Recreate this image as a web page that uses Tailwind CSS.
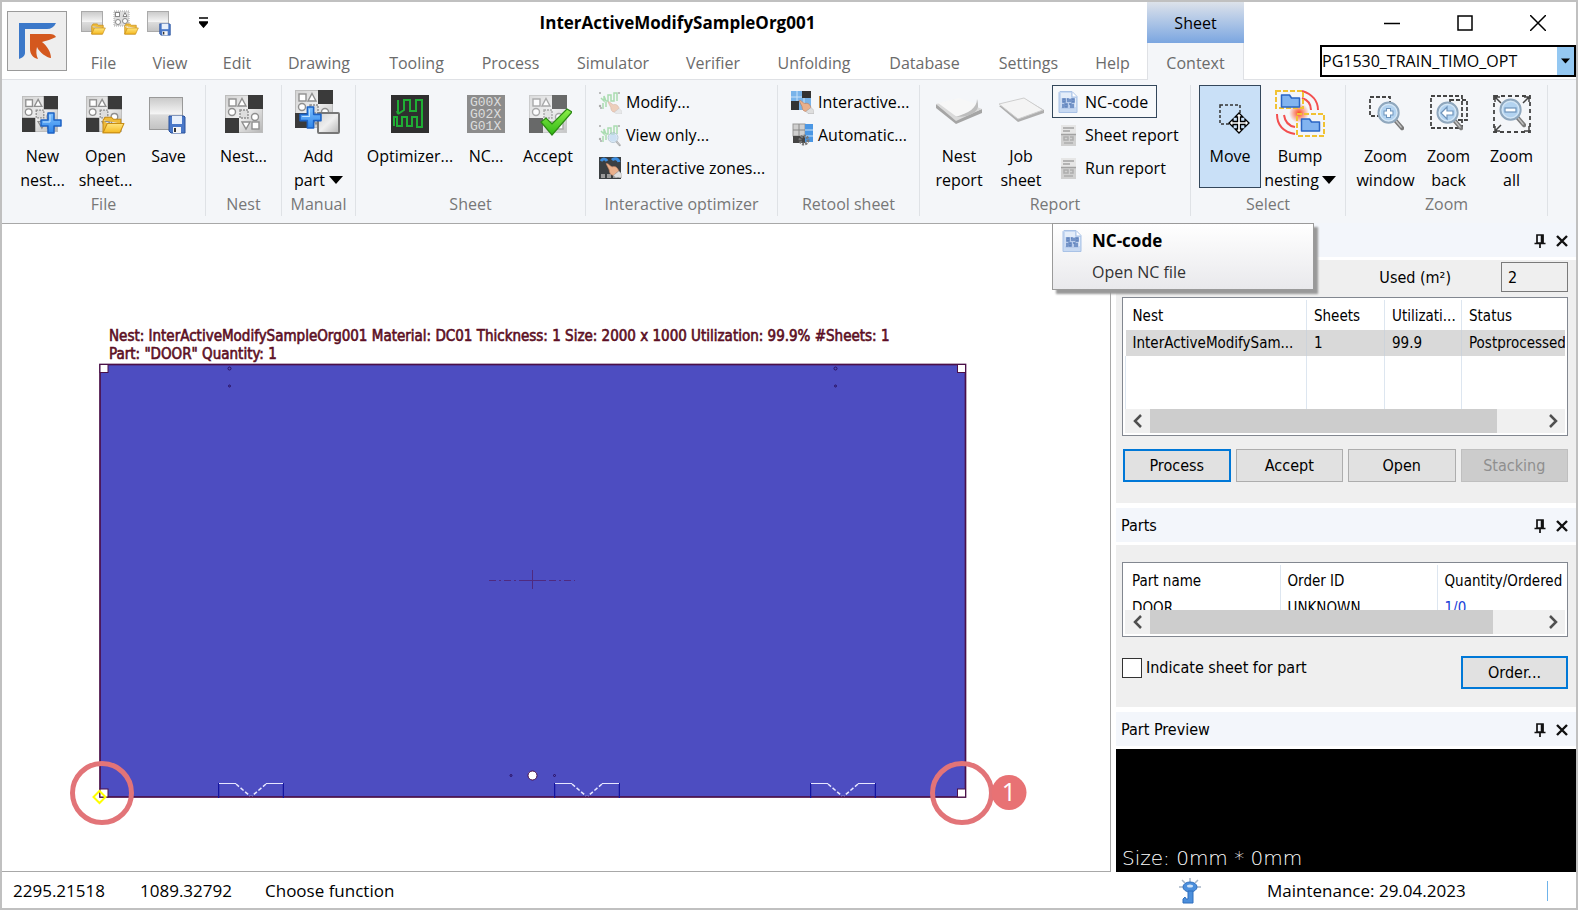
<!DOCTYPE html>
<html lang="en">
<head>
  <meta charset="UTF-8" />
  <meta name="viewport" content="width=device-width, initial-scale=1" />
  <title>InterActiveModifySampleOrg001</title>
  <script src="https://cdn.jsdelivr.net/npm/@tailwindcss/browser@4"></script>
</head>
<body class="h-screen flex flex-col overflow-hidden border-2 border-[#c0c0c0] bg-white text-black text-base font-['Open_Sans','Noto_Sans',sans-serif]">

  <!-- Shared icon parts -->
  <svg class="absolute w-0 h-0" aria-hidden="true">
    <defs>
      <linearGradient id="silver" x1="0" y1="0" x2="1" y2="1"><stop offset="0" stop-color="#d2d2d2" /><stop offset=".5" stop-color="#efefef" /><stop offset="1" stop-color="#b5b5b5" /></linearGradient>
      <linearGradient id="sheetFill" x1="0" y1="0" x2="0" y2="1"><stop offset="0" stop-color="#c9c9c9" /><stop offset=".5" stop-color="#f4f4f4" /><stop offset=".55" stop-color="#dcdcdc" /><stop offset="1" stop-color="#c2c2c2" /></linearGradient>
      <linearGradient id="gold" x1="0" y1="0" x2="0" y2="1"><stop offset="0" stop-color="#ffe680" /><stop offset="1" stop-color="#f5b921" /></linearGradient>
      <linearGradient id="blueFill" x1="0" y1="0" x2="0" y2="1"><stop offset="0" stop-color="#7cc0ff" /><stop offset="1" stop-color="#2f86ea" /></linearGradient>
      <linearGradient id="greenFill" x1="0" y1="0" x2="0" y2="1"><stop offset="0" stop-color="#8df04a" /><stop offset="1" stop-color="#30b814" /></linearGradient>
      <radialGradient id="glow"><stop offset="0" stop-color="#ff4a1c" /><stop offset="1" stop-color="#ff4a1c" stop-opacity="0" /></radialGradient>
    </defs>
    <symbol id="grid" viewBox="0 0 38 38">
      <rect x=".5" y=".5" width="37" height="37" fill="url(#silver)" stroke="#bdbdbd" />
      <rect x="23" y="0" width="15" height="14" fill="#3a3a3a" />
      <rect x="0" y="23" width="14" height="15" fill="#3a3a3a" />
      <g fill="#fff" stroke="#8f8f8f" stroke-width="1.4">
        <rect x="4" y="4" width="7" height="7" /><path d="M17 3.500l4 7.500h-8z" /><circle cx="7" cy="17" r="3.500" />
        <rect x="15" y="15" width="8" height="8" stroke-dasharray="2 1" fill="#ddd" /><circle cx="30" cy="22" r="3.500" />
        <path d="M17 27h8l-4 7z" /><rect x="27" y="27" width="7" height="7" />
      </g>
    </symbol>
    <symbol id="plus" viewBox="0 0 22 22">
      <path d="M8 1h6v7h7v6h-7v7H8v-7H1V8h7z" fill="url(#blueFill)" stroke="#1c62c4" stroke-width="1.5" stroke-linejoin="round" />
      <path d="M10 3v7H3" fill="none" stroke="#bfe2ff" />
    </symbol>
    <symbol id="folder" viewBox="0 0 22 17">
      <path d="M1 4l2-3h6l2 2h7v4M1 4v12h16" fill="#eebb3a" stroke="#c88d14" />
      <path d="M1 16l4-9h16l-4 9z" fill="url(#gold)" stroke="#c88d14" stroke-linejoin="round" />
    </symbol>
    <symbol id="floppy" viewBox="0 0 18 19">
      <path d="M1 1h15l1 1v16H3l-2-2z" fill="#4a78c8" stroke="#29509b" />
      <rect x="4" y="1" width="10" height="8" fill="#e8f0fb" /><rect x="5" y="12" width="8" height="6" fill="#f6f6f6" /><rect x="6" y="13" width="2" height="4" fill="#333" />
    </symbol>
    <symbol id="lens" viewBox="0 0 28 32">
      <path d="M19 20l7 8" stroke="#7a7a7a" stroke-width="4.500" stroke-linecap="round" /><path d="M20 21l5 6" stroke="#c4c4c4" stroke-width="1.500" stroke-linecap="round" />
      <circle cx="12" cy="12" r="10.500" fill="#d3e6f6" stroke="#8fa7bd" stroke-width="2" /><circle cx="12" cy="12" r="8" fill="#b3d3f0" />
    </symbol>
    <symbol id="zigzag" viewBox="0 0 24 24">
      <path d="M3 8l3 3v-5l2 5h2V5h3v6h3V3h3v8M5 13v6m3-7v5" fill="none" stroke="#a9dcb0" stroke-width="1.500" />
      <g fill="#aaa"><circle cx="2" cy="3" r="1" /><circle cx="21" cy="3" r="1" /><circle cx="2" cy="16" r="1.200" /><circle cx="3" cy="18" r="1" /></g>
    </symbol>
    <symbol id="hand" viewBox="0 0 16 14">
      <path d="M1 1c2-1 4 3 6 3 3-1 5 1 6 4l-5 4C5 12 4 9 4 7z" fill="#e9b08c" stroke="#b97a5c" stroke-width=".6" /><path d="M8 12l5-4 3 3v3h-6z" fill="#dedede" stroke="#aaa" stroke-width=".5" />
    </symbol>
    <symbol id="ncfile" viewBox="0 0 22 24">
      <path d="M3 1.500h12l5 5v16H2v-20z" fill="#c7d9f2" stroke="#a9c2e6" /><path d="M4 3h10v5h5v9H4z" fill="#e4edf9" /><path d="M15 2v5h5" fill="#fff" stroke="#a9c2e6" />
      <rect x="4.500" y="8" width="13" height="11" fill="#b9cceb" />
      <path d="M6 9v3h2V9zM10 9h1v3M13 9v3M15 9h2v3h-2zM6 14v4M8 14h2v3H8zM12 14h2v4M16 14v4" fill="none" stroke="#5f82bd" stroke-width="1.500" />
    </symbol>
    <symbol id="report" viewBox="0 0 22 24">
      <rect x="4" y="2" width="15" height="21" fill="#d0d0d0" /><rect x="4" y="2" width="15" height="9" fill="#e6e6e6" />
      <path d="M6 5h11M6 8h7M4 11.500h15" stroke="#a2a2a2" stroke-width="1.500" /><path d="M7 14h4v3H7zM13 14h3v3h-3M7 20h9" fill="none" stroke="#adadad" stroke-width="1.500" />
    </symbol>
    <symbol id="part" viewBox="0 0 20 14">
      <path d="M1 1h8l2 3h8v9H1z" fill="#82b4f0" stroke="#2a65c4" stroke-width="1.500" stroke-linejoin="round" />
    </symbol>
    <symbol id="pin" viewBox="0 0 14 16">
      <path d="M4 2h6v8H4zM1.500 10.500h11M7 11v4" fill="none" stroke="#111" stroke-width="1.700" /><path d="M9 2v8" stroke="#111" stroke-width="2.500" />
    </symbol>
    <symbol id="cross" viewBox="0 0 14 14"><path d="M2 2l10 10M12 2L2 12" stroke="#111" stroke-width="2.400" /></symbol>
    <symbol id="caret" viewBox="0 0 14 8"><path d="M0 0h14L7 8z" fill="#000" /></symbol>
    <symbol id="chevron" viewBox="0 0 10 14"><path d="M8 1L2 7l6 6" fill="none" stroke="#505050" stroke-width="2.500" /></symbol>
    <symbol id="notch" viewBox="0 0 66 16">
      <path d="M.5 1v15M65.500 1v15" stroke="#1414a0" stroke-width="1.500" /><path d="M1 1.500h17M48 1.500h17" stroke="#e6e6ff" />
      <path d="M18 2l14 12M48 2L34 14" stroke="#e6e6ff" stroke-width="1.500" stroke-dasharray="4 2" />
    </symbol>
  </svg>

  <!-- Title bar and tabs -->
  <header class="flex shrink-0">
    <div class="shrink-0 pl-[5px] pt-[9px] border-b border-[#dfe1e5]">
      <button class="w-[60px] h-[60px] border border-[#9a9a9a] bg-[#eeeeee] flex items-center justify-center" aria-label="Application menu">
        <svg class="w-10 h-10" viewBox="0 0 40 40">
          <path d="M2 2h37c-2 4-5 6-9 6H8v24c0 3-3 5-6 6z" fill="#3b78c9" />
          <path d="M13 13h20c3 0 5 1 6 3-4 2-10 4-14 5 5 4 9 10 9 16-4 0-12-6-14-11-1 4-1 8 1 12-5-1-8-5-8-10z" fill="#d4581e" />
        </svg>
      </button>
    </div>
    <div class="flex-1 min-w-0">
      <div class="flex h-[41px]">
        <div class="flex items-center gap-[7px] pl-[13px]">
          <button aria-label="Open"><svg class="w-[26px] h-[26px]" viewBox="0 0 26 26"><rect x="1.500" y="1.500" width="21" height="20" fill="url(#sheetFill)" stroke="#aaa" /><use href="#folder" x="11" y="13" width="15" height="12" /></svg></button>
          <button aria-label="Open sheet"><svg class="w-[26px] h-[26px]" viewBox="0 0 26 26"><rect x="1" y="1" width="15" height="15" fill="#ddd" stroke="#aaa" stroke-dasharray="1 1" /><g fill="#fff" stroke="#888"><rect x="2.500" y="2.500" width="4" height="4" /><path d="M10 6.500l2-4 2 4z" /><circle cx="5" cy="12" r="2.500" /><circle cx="12" cy="11" r="2.500" /></g><use href="#folder" x="11" y="13" width="15" height="12" /></svg></button>
          <button aria-label="Save"><svg class="w-[26px] h-[26px]" viewBox="0 0 26 26"><rect x="1.500" y="1.500" width="21" height="20" fill="url(#sheetFill)" stroke="#aaa" /><use href="#floppy" x="13" y="13" width="12" height="13" /></svg></button>
          <button class="ml-5" aria-label="Customize toolbar"><svg class="w-[9px] h-[11px]" viewBox="0 0 9 11"><path d="M0 1h9M0 5h9L4.500 10z" stroke="#000" stroke-width="1.500" /></svg></button>
        </div>
        <h1 class="flex-1 flex items-center justify-center text-[17px] font-bold">InterActiveModifySampleOrg001</h1>
        <div class="w-[97px] flex items-center justify-center bg-gradient-to-b from-[#dde2ea] to-[#7ba6e0]">Sheet</div>
        <div class="w-[332px] flex items-center justify-end gap-[57px] pr-[30px]">
          <button aria-label="Minimize"><svg class="w-4 h-4" viewBox="0 0 16 16"><path d="M0 8.500h16" stroke="#000" stroke-width="1.500" /></svg></button>
          <button aria-label="Maximize"><svg class="w-4 h-4" viewBox="0 0 16 16"><rect x="1" y="1" width="14" height="14" fill="none" stroke="#000" stroke-width="1.500" /></svg></button>
          <button aria-label="Close"><svg class="w-4 h-4" viewBox="0 0 16 16"><path d="M0 0l16 16M16 0L0 16" stroke="#000" stroke-width="1.500" /></svg></button>
        </div>
      </div>
      <div class="flex h-[37px]">
        <nav class="flex flex-1 pl-[6px] pt-1 text-[#6b6b6b] border-b border-[#dfe1e5] *:flex *:items-center *:justify-center">
          <a href="#" class="w-[61px]">File</a>
          <a href="#" class="w-[72px]">View</a>
          <a href="#" class="w-[62px]">Edit</a>
          <a href="#" class="w-[102px]">Drawing</a>
          <a href="#" class="w-[93px]">Tooling</a>
          <a href="#" class="w-[95px]">Process</a>
          <a href="#" class="w-[110px]">Simulator</a>
          <a href="#" class="w-[90px]">Verifier</a>
          <a href="#" class="w-[112px]">Unfolding</a>
          <a href="#" class="w-[109px]">Database</a>
          <a href="#" class="w-[99px]">Settings</a>
          <a href="#" class="w-[69px]">Help</a>
        </nav>
        <a href="#" class="w-[97px] flex items-center justify-center pt-[3px] bg-[#f4f6f9] border-x border-[#dfe1e5] text-[#6b6b6b]">Context</a>
        <div class="w-[332px] flex justify-end items-start pt-[2px] border-b border-[#dfe1e5]">
          <div class="relative w-[256px] h-8">
            <select aria-label="Machine" class="appearance-none w-full h-full border-2 border-black bg-white">
              <option>PG1530_TRAIN_TIMO_OPT</option>
            </select>
            <span class="absolute right-[2px] top-[2px] w-[17px] h-7 bg-[#94c8f2] flex items-center justify-center pointer-events-none"><svg class="w-[9px] h-[6px]"><use href="#caret" /></svg></span>
          </div>
        </div>
      </div>
    </div>
  </header>

  <!-- Ribbon -->
  <section class="flex shrink-0 h-[143px] pt-[5px] pb-[7px] bg-[#f4f6f9] leading-6 whitespace-nowrap">
    <div class="w-[204px] flex flex-col border-r border-[#dfe2e6]">
      <div class="flex h-[107px] pl-[9px]">
        <button class="w-[63px] h-[106px] flex flex-col items-center pt-[5px]">
          <svg class="w-12 h-12 mb-[6px] shrink-0" viewBox="0 0 48 48"><use href="#grid" x="3" y="6" width="36" height="36" /><use href="#plus" x="20" y="22" width="24" height="22" /></svg>
          New<br>nest...
        </button>
        <button class="w-[63px] h-[106px] flex flex-col items-center pt-[5px]">
          <svg class="w-12 h-12 mb-[6px] shrink-0" viewBox="0 0 48 48"><use href="#grid" x="4" y="6" width="36" height="36" /><use href="#folder" x="20" y="26" width="23" height="18" /></svg>
          Open<br>sheet...
        </button>
        <button class="w-[63px] h-[106px] flex flex-col items-center pt-[5px]">
          <svg class="w-12 h-12 mb-[6px] shrink-0" viewBox="0 0 48 48"><rect x="4.500" y="7.500" width="33" height="32" fill="url(#sheetFill)" stroke="#999" /><use href="#floppy" x="23" y="25" width="18" height="19" /></svg>
          Save
        </button>
      </div>
      <div class="text-center text-[#777]">File</div>
    </div>
    <div class="w-[76px] flex flex-col border-r border-[#dfe2e6]">
      <div class="flex h-[107px] justify-center">
        <button class="h-[106px] flex flex-col items-center pt-[5px]">
          <svg class="w-12 h-12 mb-[6px] shrink-0" viewBox="0 0 48 48"><use href="#grid" x="5" y="5" width="38" height="38" /></svg>
          Nest...
        </button>
      </div>
      <div class="text-center text-[#777]">Nest</div>
    </div>
    <div class="w-[74px] flex flex-col border-r border-[#dfe2e6]">
      <div class="flex h-[107px] justify-center">
        <button class="h-[106px] flex flex-col items-center pt-[5px]">
          <svg class="w-12 h-12 mb-[6px] shrink-0" viewBox="0 0 48 48"><use href="#grid" x="1" y="0" width="38" height="38" /><rect x="24" y="23" width="21" height="20" rx="1" fill="url(#silver)" stroke="#777" stroke-width="2" /><use href="#plus" x="5" y="16" width="23" height="23" /></svg>
          Add
          <span class="flex items-center gap-1">part<svg class="w-[14px] h-2"><use href="#caret" /></svg></span>
        </button>
      </div>
      <div class="text-center text-[#777]">Manual</div>
    </div>
    <div class="w-[230px] flex flex-col border-r border-[#dfe2e6]">
      <div class="flex h-[107px] pl-[8px]">
        <button class="w-[92px] h-[106px] flex flex-col items-center pt-[5px]">
          <svg class="w-12 h-12 mb-[6px] shrink-0" viewBox="0 0 48 48"><rect x="5" y="5" width="38" height="38" fill="#2f2f2f" /><path d="M12 10v14l-1-3m1 3l6-4V10h6v11h6V10h6v27h-5V27h-5v9h-5V27h-5v9h-5V27h-3v9" fill="none" stroke="#1fae34" stroke-width="2" /></svg>
          Optimizer...
        </button>
        <button class="w-[60px] h-[106px] flex flex-col items-center pt-[5px]">
          <svg class="w-12 h-12 mb-[6px] shrink-0" viewBox="0 0 48 48" font-family="Liberation Mono, monospace" font-size="13" fill="#dcdcdc"><rect x="5" y="5" width="38" height="38" fill="#8c8c8c" /><text x="8" y="16">G00X</text><text x="8" y="28">G02X</text><text x="8" y="40">G01X</text></svg>
          NC...
        </button>
        <button class="w-[64px] h-[106px] flex flex-col items-center pt-[5px]">
          <svg class="w-12 h-12 mb-[6px] shrink-0" viewBox="0 0 48 48"><use href="#grid" x="5" y="5" width="38" height="38" opacity=".75" /><path d="M17 32l5-4 6 6 15-15 5 3-20 23z" fill="url(#greenFill)" stroke="#2c8a14" stroke-width="1.200" /></svg>
          Accept
        </button>
      </div>
      <div class="text-center text-[#777]">Sheet</div>
    </div>
    <div class="w-[192px] flex flex-col border-r border-[#dfe2e6]">
      <div class="h-[107px] pl-3">
        <button class="h-[33px] flex items-center gap-1"><svg class="w-6 h-6" viewBox="0 0 24 24"><use href="#zigzag" width="24" height="24" /><use href="#hand" x="9" y="11" width="15" height="13" opacity=".55" /></svg>Modify...</button>
        <button class="h-[33px] flex items-center gap-1"><svg class="w-6 h-6" viewBox="0 0 24 24"><use href="#zigzag" width="24" height="24" /><use href="#lens" x="9" y="9" width="14" height="15" opacity=".6" /></svg>View only...</button>
        <button class="h-[33px] flex items-center gap-1"><svg class="w-6 h-6" viewBox="0 0 24 24"><rect x="1" y="1" width="22" height="22" fill="#3b3f42" /><path d="M3 5c2-3 5-2 6 0M14 4c2-2 6-2 7 2" stroke="#3d8ee0" stroke-width="3" fill="none" /><path d="M3 20h20" stroke="#999" stroke-width="4" stroke-dasharray="4 2" /><use href="#hand" x="7" y="6" width="17" height="16" /></svg>Interactive zones...</button>
      </div>
      <div class="text-center text-[#777]">Interactive optimizer</div>
    </div>
    <div class="w-[142px] flex flex-col border-r border-[#dfe2e6]">
      <div class="h-[107px] pl-3">
        <button class="h-[33px] flex items-center gap-1"><svg class="w-6 h-6" viewBox="0 0 24 24"><rect x="1" y="1" width="20" height="19" fill="#79b4ea" /><path d="M1 7h20M7 1v19M14 1v19" stroke="#c9e2f8" /><path d="M12 1h9v7h-9zM1 11h8v9H1z" fill="#333" /><use href="#hand" x="8" y="9" width="16" height="15" /></svg>Interactive...</button>
        <button class="h-[33px] flex items-center gap-1"><svg class="w-6 h-6" viewBox="0 0 24 24"><rect x="3" y="1" width="12" height="12" fill="#cfcfcf" stroke="#999" /><path d="M3 7h12M9 1v12" stroke="#888" /><rect x="15" y="1" width="8" height="18" fill="#4b97e4" /><path d="M15 7h8M15 13h8" stroke="#c9e2f8" /><rect x="3" y="13" width="12" height="7" fill="#444" /><circle cx="14" cy="17" r="4" fill="none" stroke="#777" stroke-width="3" stroke-dasharray="2 1" /></svg>Automatic...</button>
      </div>
      <div class="text-center text-[#777]">Retool sheet</div>
    </div>
    <div class="w-[271px] flex flex-col border-r border-[#dfe2e6]">
      <div class="flex h-[107px] pl-[8px]">
        <button class="w-[62px] h-[106px] flex flex-col items-center pt-[5px]">
          <svg class="w-12 h-12 mb-[6px] shrink-0" viewBox="0 0 48 48"><path d="M1 18l20 16 26-11v-4L21 29 1 14z" fill="#a5a5a5" /><path d="M1 14L22 9l25 10L21 31z" fill="#dadada" /><path d="M3 13L24 8l18 6c-3 8-12 10-20 13z" fill="#f7f7f7" /><path d="M42 9c0 9-8 14-22 18 12 0 21-3 23-10 0-3 0-5-1-8z" fill="#bdbdbd" /></svg>
          Nest<br>report
        </button>
        <button class="w-[62px] h-[106px] flex flex-col items-center pt-[5px]">
          <svg class="w-12 h-12 mb-[6px] shrink-0" viewBox="0 0 48 48"><path d="M2 16l19 16 26-9v-3L28 9z" fill="#aeaeae" /><path d="M2 14l25-6 19 12-25 9z" fill="#f4f4f4" stroke="#cecece" /></svg>
          Job<br>sheet
        </button>
        <div>
          <button class="h-[33px] flex items-center gap-[6px] pl-1 pr-2 border border-[#33475b] bg-[#f7f9fb]"><svg class="w-[22px] h-6"><use href="#ncfile" /></svg>NC-code</button>
          <button class="h-[33px] flex items-center gap-[6px] pl-[5px]"><svg class="w-[22px] h-6"><use href="#report" /></svg>Sheet report</button>
          <button class="h-[33px] flex items-center gap-[6px] pl-[5px]"><svg class="w-[22px] h-6"><use href="#report" /></svg>Run report</button>
        </div>
      </div>
      <div class="text-center text-[#777]">Report</div>
    </div>
    <div class="w-[155px] flex flex-col border-r border-[#dfe2e6]">
      <div class="flex h-[107px] pl-[8px]">
        <button class="w-[62px] h-[103px] flex flex-col items-center pt-1 border border-[#33475b] bg-[#c9e0f7]">
          <svg class="w-12 h-12 mb-[6px] shrink-0" viewBox="0 0 48 48"><rect x="14" y="15" width="20" height="19" fill="none" stroke="#333" stroke-width="1.500" stroke-dasharray="3 2" /><path d="M33 23l4 4h-2.500v4.500h4.500v-2.500l4 4-4 4v-2.500h-4.500v4.500h2.500l-4 4-4-4h2.500v-4.500h-4.500v2.500l-4-4 4-4v2.500h4.500v-4.500h-2.500z" fill="#fff" stroke="#000" stroke-width="1.300" /></svg>
          Move
        </button>
        <button class="w-[78px] h-[106px] flex flex-col items-center pt-[5px]">
          <svg class="w-[52px] h-12 mb-[6px] shrink-0" viewBox="0 0 52 48"><circle cx="25" cy="23" r="10" fill="url(#glow)" /><path d="M28 1c10 3 16 10 16 19M28 8c6 2 9 6 9 12M3 24c0 12 7 18 18 20M10 25c1 7 5 11 11 12" fill="none" stroke="#f34f4f" stroke-width="2" /><rect x="2" y="1" width="27" height="17" fill="none" stroke="#f1c232" stroke-width="2" stroke-dasharray="5 2" /><rect x="23" y="24" width="27" height="22" fill="none" stroke="#f1c232" stroke-width="2" stroke-dasharray="5 2" /><use href="#part" x="6" y="4" width="21" height="14" /><use href="#part" x="26" y="28" width="21" height="14" /></svg>
          Bump
          <span class="flex items-center gap-[3px]">nesting<svg class="w-[14px] h-2"><use href="#caret" /></svg></span>
        </button>
      </div>
      <div class="text-center text-[#777]">Select</div>
    </div>
    <div class="w-[202px] flex flex-col border-r border-[#dfe2e6]">
      <div class="flex h-[107px] pl-[8px]">
        <button class="w-[63px] h-[106px] flex flex-col items-center pt-[5px]">
          <svg class="w-12 h-12 mb-[6px] shrink-0" viewBox="0 0 48 48"><rect x="8" y="7" width="20" height="19" fill="none" stroke="#444" stroke-width="1.800" stroke-dasharray="4 2" /><use href="#lens" x="15" y="11" width="27" height="31" /><path d="M21.500 23h10m-5-5v10" stroke="#6f94bb" stroke-width="5" /><path d="M22.500 23h8m-4-4v8" stroke="#fff" stroke-width="3" /></svg>
          Zoom<br>window
        </button>
        <button class="w-[63px] h-[106px] flex flex-col items-center pt-[5px]">
          <svg class="w-12 h-12 mb-[6px] shrink-0" viewBox="0 0 48 48"><rect x="6" y="6" width="31" height="32" fill="none" stroke="#444" stroke-width="1.800" stroke-dasharray="4 2" /><rect x="25" y="10" width="17" height="20" fill="none" stroke="#444" stroke-width="1.800" stroke-dasharray="4 2" /><use href="#lens" x="11" y="11" width="27" height="31" /><path d="M16 23l6-6v4h6v4h-6v4z" fill="#fff" stroke="#6f94bb" stroke-width="1.200" /></svg>
          Zoom<br>back
        </button>
        <button class="w-[63px] h-[106px] flex flex-col items-center pt-[5px]">
          <svg class="w-12 h-12 mb-[6px] shrink-0" viewBox="0 0 48 48"><rect x="6" y="6" width="36" height="36" fill="none" stroke="#444" stroke-width="1.800" stroke-dasharray="4 3" /><path d="M7 12V7h5M36 7h5v5M41 36v5h-5M12 41H7v-5M7 7l6 6M41 7l-6 6M7 41l6-6" fill="none" stroke="#444" stroke-width="1.500" /><use href="#lens" x="11" y="8" width="27" height="31" /><rect x="17" y="18" width="11" height="4" fill="#fff" stroke="#6f94bb" stroke-width="1.200" /></svg>
          Zoom<br>all
        </button>
      </div>
      <div class="text-center text-[#777]">Zoom</div>
    </div>
  </section>

  <!-- Work area -->
  <div class="flex flex-1 min-h-0 relative font-['DejaVu_Sans_Condensed','Noto_Sans',sans-serif]">
    <main class="flex-1 min-w-0 mr-[5px] overflow-hidden border border-l-0 border-[#a8a8a8] bg-white">
      
      <svg class="w-[1108px] h-[647px]" viewBox="2 224 1108 647">
        <g class="whitespace-pre" fill="#5c0f24" stroke="#5c0f24" stroke-width=".6" font-size="15">
          <text x="109" y="341">Nest: InterActiveModifySampleOrg001  Material: DC01  Thickness: 1  Size: 2000 x 1000  Utilization: 99.9%  #Sheets: 1</text>
          <text x="109" y="359">Part: "DOOR"  Quantity: 1</text>
        </g>
        <rect x="100" y="364.500" width="865.500" height="432.500" fill="#4d4dc1" stroke="#4a1048" stroke-width="1.700" />
        <g fill="#fff" stroke="#4a1048">
          <rect x="100" y="364.500" width="8" height="8" /><rect x="957.500" y="364.500" width="8" height="8" />
          <rect x="100" y="789" width="8" height="8" /><rect x="957.500" y="789" width="8" height="8" />
          <circle cx="532.500" cy="775.500" r="4.500" />
        </g>
        <g fill="none" stroke="#2a1060">
          <circle cx="229.500" cy="368.500" r="1.500" /><circle cx="229.500" cy="386" r="1" /><circle cx="835.500" cy="368.500" r="1.500" /><circle cx="835.500" cy="386" r="1" />
          <circle cx="511" cy="775.500" r="1" /><circle cx="554.500" cy="775.500" r="1" />
          <path d="M489 580.500h86" stroke="#4f2a80" stroke-dasharray="7 3 2 3" /><path d="M532.500 570v19M519 580.500h27" stroke="#4f2a80" />
        </g>
        <use href="#notch" x="218" y="782" width="66" height="16" />
        <use href="#notch" x="554" y="782" width="66" height="16" />
        <use href="#notch" x="810" y="782" width="66" height="16" />
        <path d="M99.500 791l6 6-6 6-6-6z" fill="none" stroke="#ff0" stroke-width="2" />
        <g fill="none" stroke="#e27478" stroke-width="5"><circle cx="102" cy="793" r="29.500" /><circle cx="962" cy="793" r="29.500" /></g>
        <circle cx="1009" cy="792.500" r="17.500" fill="#e87274" />
        <text x="1009" y="801" fill="#fff" font-size="25" font-family="Open Sans, sans-serif" text-anchor="middle">1</text>
      </svg>
    </main>

    <aside class="w-[460px] shrink-0 flex flex-col bg-[#efefef]">
      <div class="h-[34px] shrink-0 flex items-center justify-end gap-2 pr-[7px] pt-px bg-[#f3f6fb]">
        <button aria-label="Pin"><svg class="w-[14px] h-4"><use href="#pin" /></svg></button>
        <button aria-label="Close panel"><svg class="w-[14px] h-[14px]"><use href="#cross" /></svg></button>
      </div>
      <div class="border-t-3 border-white pl-[6px] pr-2 pb-[21px]">
        <div class="flex items-center justify-end pt-[2px]">
          <label for="used" class="pt-px">Used (m²)</label>
          <input id="used" value="2" readonly class="ml-[50px] w-[67px] h-[30px] px-[6px] border border-[#7a7a7a] bg-[#efefef]" />
        </div>
        <div class="mt-[5px] h-[139px] flex flex-col border border-[#828790] bg-white p-[2px]">
          <div class="flex-1 flex overflow-hidden text-[15px]">
            <table class="table-fixed w-[520px] shrink-0 h-full text-left whitespace-nowrap">
              <thead>
                <tr class="h-[30px] *:font-normal *:pt-[3px] *:pl-[7px] *:border-r *:border-[#dde6f0]">
                  <th class="w-[181px]">Nest</th><th class="w-[78px]">Sheets</th><th class="w-[77px]">Utilizati...</th><th>Status</th>
                </tr>
              </thead>
              <tbody>
                <tr class="h-[26px] bg-[#d9d9d9] *:pl-[7px] *:border-r *:border-[#cdd3da]"><td>InterActiveModifySam...</td><td>1</td><td>99.9</td><td>Postprocessed</td></tr>
                <tr class="*:border-r *:border-[#dde6f0]"><td class="border-l border-l-[#7da7d8]"></td><td></td><td></td><td></td></tr>
              </tbody>
            </table>
          </div>
          <div class="h-6 flex items-stretch bg-[#f0f0f0]">
            <button class="w-[25px] flex items-center justify-center" aria-label="Scroll left"><svg class="w-[10px] h-[14px]"><use href="#chevron" /></svg></button>
            <div class="flex-1"><div class="h-full bg-[#cdcdcd]" style="width: 89%"></div></div>
            <button class="w-[25px] flex items-center justify-center" aria-label="Scroll right"><svg class="w-[10px] h-[14px] rotate-180"><use href="#chevron" /></svg></button>
          </div>
        </div>
        <div class="grid grid-cols-4 gap-[5px] mt-[13px] pl-px *:h-[33px] *:bg-[#e1e1e1]">
          <button class="border-2 border-[#0078d7]">Process</button>
          <button class="border border-[#adadad]">Accept</button>
          <button class="border border-[#adadad]">Open</button>
          <button class="border border-[#bfbfbf] bg-[#cccccc]! text-[#8f8f8f]" disabled>Stacking</button>
        </div>
      </div>

      <div class="h-[42px] shrink-0 flex items-center gap-2 pl-[5px] pr-[7px] pt-[2px] bg-[#f3f6fb] border-t-5 border-b-3 border-white">
        <h2 class="flex-1">Parts</h2>
        <button aria-label="Pin"><svg class="w-[14px] h-4"><use href="#pin" /></svg></button>
        <button aria-label="Close panel"><svg class="w-[14px] h-[14px]"><use href="#cross" /></svg></button>
      </div>
      <div class="pl-[6px] pr-2 pt-[17px] pb-[18px]">
        <div class="h-[75px] flex flex-col border border-[#828790] bg-white p-[2px]">
          <div class="flex-1 overflow-hidden text-[15px]">
            <table class="table-fixed w-[520px] text-left whitespace-nowrap">
              <thead>
                <tr class="h-[32px] *:font-normal *:pl-[7px] *:border-r *:border-[#dde6f0]"><th class="w-[155px]">Part name</th><th class="w-[157px]">Order ID</th><th>Quantity/Ordered</th></tr>
              </thead>
              <tbody>
                <tr class="*:pl-[7px] *:border-r *:border-[#dde6f0]"><td>DOOR</td><td>UNKNOWN</td><td class="text-[#1a3fd8]">1/0</td></tr>
              </tbody>
            </table>
          </div>
          <div class="h-6 flex items-stretch bg-[#f0f0f0]">
            <button class="w-[25px] flex items-center justify-center" aria-label="Scroll left"><svg class="w-[10px] h-[14px]"><use href="#chevron" /></svg></button>
            <div class="flex-1"><div class="h-full bg-[#cdcdcd]" style="width: 88%"></div></div>
            <button class="w-[25px] flex items-center justify-center" aria-label="Scroll right"><svg class="w-[10px] h-[14px] rotate-180"><use href="#chevron" /></svg></button>
          </div>
        </div>
        <div class="flex items-start justify-between mt-[19px]">
          <label class="flex items-center gap-1"><input type="checkbox" class="appearance-none w-5 h-5 border border-[#333] bg-white" />Indicate sheet for part</label>
          <button class="w-[107px] h-[33px] border-2 border-[#0078d7] bg-[#e1e1e1]">Order...</button>
        </div>
      </div>

      <div class="h-[42px] shrink-0 flex items-center gap-2 pl-[5px] pr-[7px] pt-[2px] bg-[#f3f6fb] border-t-5 border-b-3 border-white">
        <h2 class="flex-1">Part Preview</h2>
        <button aria-label="Pin"><svg class="w-[14px] h-4"><use href="#pin" /></svg></button>
        <button aria-label="Close panel"><svg class="w-[14px] h-[14px]"><use href="#cross" /></svg></button>
      </div>
      <div class="flex-1 flex items-end bg-black text-white text-xl font-extralight pl-[6px] font-['DejaVu_Sans',sans-serif]">Size: 0mm * 0mm</div>
    </aside>

    <!-- Tooltip -->
    <div role="tooltip" class="absolute right-[262px] top-0 w-[262px] h-[67px] flex gap-[9px] pl-2 pt-[5px] border border-[#9a9a9a] bg-gradient-to-b from-white to-[#e9e9ec] shadow-[4px_4px_2px_#999] font-['Open_Sans','Noto_Sans',sans-serif]">
      <svg class="w-[22px] h-6"><use href="#ncfile" /></svg>
      <div class="leading-6"><div class="text-[17px] font-bold">NC-code</div><div class="mt-[7px] text-[#333]">Open NC file</div></div>
    </div>
  </div>

  <!-- Status bar -->
  <footer class="h-9 shrink-0 flex items-center pl-[11px] pr-7 pt-[2px] text-[17px]">
    <span class="w-[127px]">2295.21518</span>
    <span class="w-[125px]">1089.32792</span>
    <span class="flex-1">Choose function</span>
    <svg class="w-[22px] h-[26px]" viewBox="0 0 22 26"><path d="M3 2l3 3M11 0v4M19 2l-3 3M0 9h4M18 9h4" stroke="#a5b4c6" stroke-width="1.500" /><ellipse cx="11" cy="9" rx="7" ry="5" fill="#4c8fdc" stroke="#2f6fbe" /><ellipse cx="11" cy="8" rx="3" ry="1.500" fill="#cfe3f8" /><path d="M9 13h5v12H4v-4l2-2 1 2h2z" fill="#4c8fdc" stroke="#2f6fbe" /></svg>
    <span class="w-[280px] ml-[66px]">Maintenance: 29.04.2023</span>
    <span class="w-px h-5 bg-[#6fb3ea]"></span>
  </footer>
</body>
</html>
